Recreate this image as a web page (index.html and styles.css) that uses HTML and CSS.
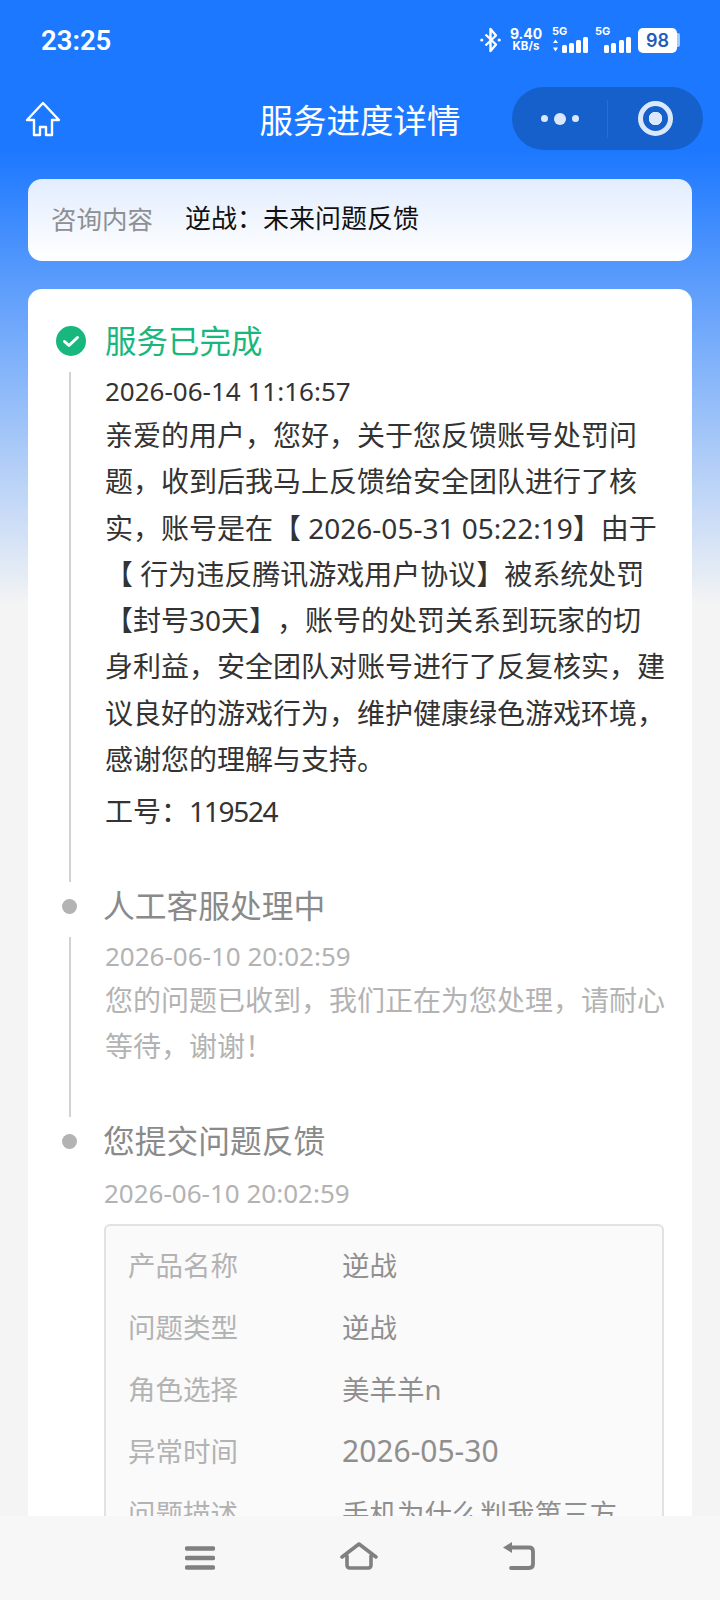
FILE: index.html
```html
<!DOCTYPE html>
<html lang="zh">
<head>
<meta charset="utf-8">
<title>服务进度详情</title>
<link rel="stylesheet" href="styles.css">
</head>
<body>
<div class="page">
  <header class="status">
    <span class="time">23:25</span>
    <div class="status-icons">
      <svg class="bt" width="21" height="26" viewBox="0 0 21 26"><path d="M5.500 7.500 L16 17.500 L10.500 24 V2 L16 8.500 L5.500 18.500" fill="none" stroke="#fff" stroke-width="2.400" stroke-linejoin="round"/><circle cx="1.800" cy="13" r="1.600" fill="#fff"/><circle cx="19.200" cy="13" r="1.600" fill="#fff"/></svg>
      <div class="speed"><span>9.40</span><span>KB/s</span></div>
      <div class="sig sig-a">
        <span class="five">5G</span>
        <svg width="36" height="16" viewBox="0 0 36 16"><path d="M3.500 3 L6 6.500 H1 Z M3.500 15 L6 11 H1 Z" fill="#fff" transform="translate(0,-0.500)"/><rect x="10" y="8" width="5" height="8" rx="1.500" fill="#fff"/><rect x="17" y="6" width="5" height="10" rx="1.500" fill="#fff"/><rect x="24" y="3" width="5" height="13" rx="1.500" fill="#fff"/><rect x="31" y="0" width="5" height="16" rx="1.500" fill="#fff"/></svg>
      </div>
      <div class="sig sig-b">
        <span class="five">5G</span>
        <svg width="27" height="16" viewBox="0 0 27 16"><rect x="0" y="8" width="5" height="8" rx="1.500" fill="#fff"/><rect x="7" y="6" width="5" height="10" rx="1.500" fill="#fff"/><rect x="15" y="3" width="5" height="13" rx="1.500" fill="#fff"/><rect x="22" y="0" width="5" height="16" rx="1.500" fill="#fff"/></svg>
      </div>
      <div class="battery"><span class="level">98</span><span class="cap"></span></div>
    </div>
  </header>

  <nav class="nav">
    <svg class="home" width="36" height="36" viewBox="0 0 36 36"><path d="M18 2 L34 19 H27 V34 H21 V26 H15 V34 H9 V19 H2 Z" fill="none" stroke="#fff" stroke-width="2.400" stroke-linejoin="round"/></svg>
    <h1 class="title">服务进度详情</h1>
    <div class="capsule">
      <div class="more"><i class="dot"></i><i class="dot dot-big"></i><i class="dot"></i></div>
      <span class="sep"></span>
      <div class="target"><i></i></div>
    </div>
  </nav>

  <main class="content">
    <section class="topic">
      <span class="topic-label">咨询内容</span>
      <span class="topic-value">逆战&#xFF1A;未来问题反馈</span>
    </section>

    <section class="card">
      <div class="step">
        <div class="step-head">
          <span class="marker">
            <svg width="30" height="30" viewBox="0 0 30 30"><circle cx="15" cy="15" r="15" fill="#18b77d"/><path d="M8.500 15.500 L13 19.500 L21.500 11.500" fill="none" stroke="#fff" stroke-width="3" stroke-linecap="round" stroke-linejoin="round"/></svg>
          </span>
          <h2 class="step-title done">服务已完成</h2>
        </div>
        <div class="step-body body-first">
          <p class="date dark">2026-06-14 11:16:57</p>
          <p class="msg dark">亲爱的用户&#xFF0C;您好&#xFF0C;关于您反馈账号处罚问题&#xFF0C;收到后我马上反馈给安全团队进行了核实&#xFF0C;账号是在【 2026-05-31 05:22:19】由于【 行为违反腾讯游戏用户协议】被系统处罚【封号30天】&#xFF0C;账号的处罚关系到玩家的切身利益&#xFF0C;安全团队对账号进行了反复核实&#xFF0C;建议良好的游戏行为&#xFF0C;维护健康绿色游戏环境&#xFF0C;感谢您的理解与支持。</p>
          <p class="job dark">工号&#xFF1A;<span class="job-num">119524</span></p>
        </div>
      </div>

      <div class="step">
        <div class="step-head">
          <span class="marker marker-dot"><i class="bullet"></i></span>
          <h2 class="step-title">人工客服处理中</h2>
        </div>
        <div class="step-body body-second">
          <p class="date">2026-06-10 20:02:59</p>
          <p class="msg">您的问题已收到&#xFF0C;我们正在为您处理&#xFF0C;请耐心等待&#xFF0C;谢谢&#xFF01;</p>
        </div>
      </div>

      <div class="step">
        <div class="step-head">
          <span class="marker marker-dot"><i class="bullet"></i></span>
          <h2 class="step-title">您提交问题反馈</h2>
        </div>
        <div class="step-body body-last">
          <p class="date">2026-06-10 20:02:59</p>
          <dl class="table">
            <div class="row"><dt>产品名称</dt><dd>逆战</dd></div>
            <div class="row"><dt>问题类型</dt><dd>逆战</dd></div>
            <div class="row"><dt>角色选择</dt><dd>美羊羊n</dd></div>
            <div class="row"><dt>异常时间</dt><dd class="num">2026-05-30</dd></div>
            <div class="row"><dt>问题描述</dt><dd>手机为什么判我第三方</dd></div>
          </dl>
        </div>
      </div>
    </section>
  </main>

  <footer class="sysbar">
    <svg width="30" height="24" viewBox="0 0 30 24"><path d="M2 2.500 H28 M2 12 H28 M2 21.500 H28" stroke="#808080" stroke-width="4.500" stroke-linecap="round"/></svg>
    <svg width="38" height="28" viewBox="0 0 38 28"><path d="M2 15 L19 2 L36 15 M7 14 V23 Q7 26 10 26 H28 Q31 26 31 23 V14" fill="none" stroke="#808080" stroke-width="3.600" stroke-linecap="round" stroke-linejoin="round"/></svg>
    <svg width="32" height="28" viewBox="0 0 32 28"><path d="M8 5.500 H26 Q30 5.500 30 9.500 V22 Q30 26 26 26 H8" fill="none" stroke="#808080" stroke-width="3.800" stroke-linecap="round"/><path d="M0 5.500 L9 0 V11 Z" fill="#808080"/></svg>
  </footer>
</div>
</body>
</html>
```
FILE: styles.css
```css
* { box-sizing: border-box; }
html, body { margin: 0; padding: 0; }
body {
  font-family: "Noto Sans", "Noto Sans CJK SC", sans-serif;
  background: #f4f4f4;
  text-spacing-trim: space-all;
  font-feature-settings: "chws" 0;
}
p, h1, h2, dl, dd { margin: 0; font-weight: 400; }
i { display: block; }

.page {
  position: relative;
  width: 720px;
  height: 1600px;
  overflow: hidden;
  background: linear-gradient(180deg, #1c78ff 0, #1c78ff 150px, #f4f4f4 605px);
}

.status {
  height: 72px;
  padding: 8px 40px 0 41px;
  display: flex;
  align-items: center;
  justify-content: space-between;
  color: #fff;
}
.time { font-family: "Roboto", sans-serif; font-size: 27.500px; font-weight: 600; }
.status-icons { display: flex; align-items: center; height: 30px; }
.bt { margin-right: 10px; }
.speed {
  display: flex;
  flex-direction: column;
  align-items: center;
  width: 30px;
  font-family: "Inter", sans-serif;
  font-weight: 700;
  line-height: 13px;
  margin-right: 11px;
}
.speed span:first-child { font-size: 14px; }
.speed span:last-child { font-size: 11.500px; }
.sig {
  position: relative;
  display: flex;
  align-items: flex-end;
  justify-content: flex-end;
  width: 36px;
  height: 26px;
  margin-right: 7px;
}
.five {
  position: absolute;
  left: 0;
  top: -2px;
  font-family: "Inter", sans-serif;
  font-size: 11px;
  font-weight: 700;
  line-height: 12px;
}
.battery { display: flex; align-items: center; }
.level {
  width: 39px;
  height: 25px;
  border-radius: 5px;
  background: #fff;
  color: #1e5dbb;
  font-family: "Inter", sans-serif;
  font-size: 18px;
  font-weight: 600;
  line-height: 25px;
  text-align: center;
}
.cap { width: 3px; height: 14px; background: rgba(255,255,255,.6); border-radius: 0 2px 2px 0; }

.nav {
  height: 93px;
  display: flex;
  align-items: center;
  position: relative;
  padding: 0 17px 0 25px;
  justify-content: space-between;
  color: #fff;
}
.title {
  position: absolute;
  left: 0;
  right: 0;
  top: 23px;
  text-align: center;
  font-size: 33.500px;
  line-height: 50px;
  pointer-events: none;
}
.capsule {
  width: 191px;
  height: 63px;
  border-radius: 32px;
  background: #1660cc;
  display: flex;
  align-items: center;
}
.more {
  width: 95px;
  display: flex;
  justify-content: center;
  align-items: center;
  gap: 6px;
}
.dot { width: 7px; height: 7px; border-radius: 50%; background: #dbe8fb; }
.dot-big { width: 12px; height: 12px; }
.sep { width: 1px; height: 38px; background: #2a6ed4; }
.target {
  flex: 1;
  display: flex;
  justify-content: center;
}
.target i {
  width: 35px;
  height: 35px;
  border-radius: 50%;
  border: 5px solid #dbe8fb;
  background: radial-gradient(circle, #dbe8fb 0 6.500px, transparent 7px);
}

.content { padding: 14px 28px 0; }
.topic {
  height: 82px;
  border-radius: 14px;
  background: linear-gradient(180deg, #e2edfe 0, #ffffff 100%);
  display: flex;
  align-items: center;
  padding: 0 23px 6px;
  font-size: 26px;
}
.topic-label { color: #8d8f93; width: 134px; font-size: 25.500px; }
.topic-value { color: #111; }

.card {
  margin-top: 28px;
  background: #fff;
  border-radius: 14px 14px 0 0;
  padding: 28px 28px 0 28px;
  height: 1400px;
}
.step-head { display: flex; align-items: center; height: 48px; }
.marker { width: 49px; display: flex; justify-content: center; flex: none; padding-right: 19px; }
.marker-dot { padding-right: 23px; }
.bullet { width: 15px; height: 15px; border-radius: 50%; background: #b3b3b3; }
.step-title { font-size: 31.750px; line-height: 48px; color: #8a8a8a; margin-left: -2px; }
.done { color: #18b77d; font-size: 31.500px; margin-left: 0; }

.step-body {
  margin-left: 13px;
  border-left: 2px solid #d2d2d2;
  padding-left: 34px;
  margin-top: 7px;
}
.date { font-size: 26px; line-height: 38px; margin-bottom: 2px; color: #b3b3b3; }
.msg { width: 560px; font-size: 28px; line-height: 46.300px; color: #b3b3b3; }
.job { font-size: 28px; line-height: 46px; margin-top: 6px; }
.job-num { letter-spacing: -1.300px; }
.date.dark, .msg.dark, .job.dark { color: #333; }
.body-first { height: 510px; }
.body-second { height: 180px; }
.body-last { border-left: 0; padding-left: 35px; margin-top: 9px; }

.table {
  margin-top: 12px;
  width: 560px;
  height: 400px;
  background: #fafafa;
  border: 2px solid #e2e2e2;
  border-radius: 6px;
  padding: 7px 22px;
}
.row { display: flex; height: 62px; align-items: center; font-size: 27.500px; }
.row dt { width: 214px; color: #b3b3b3; }
.row dd { color: #8f8f8f; }
.row .num { font-size: 30px; }

.sysbar {
  position: absolute;
  left: 0;
  right: 0;
  bottom: 0;
  height: 84px;
  background: #f7f7f7;
  display: flex;
  align-items: flex-end;
  justify-content: center;
  padding-bottom: 30px;
  gap: 125px;
}
```
